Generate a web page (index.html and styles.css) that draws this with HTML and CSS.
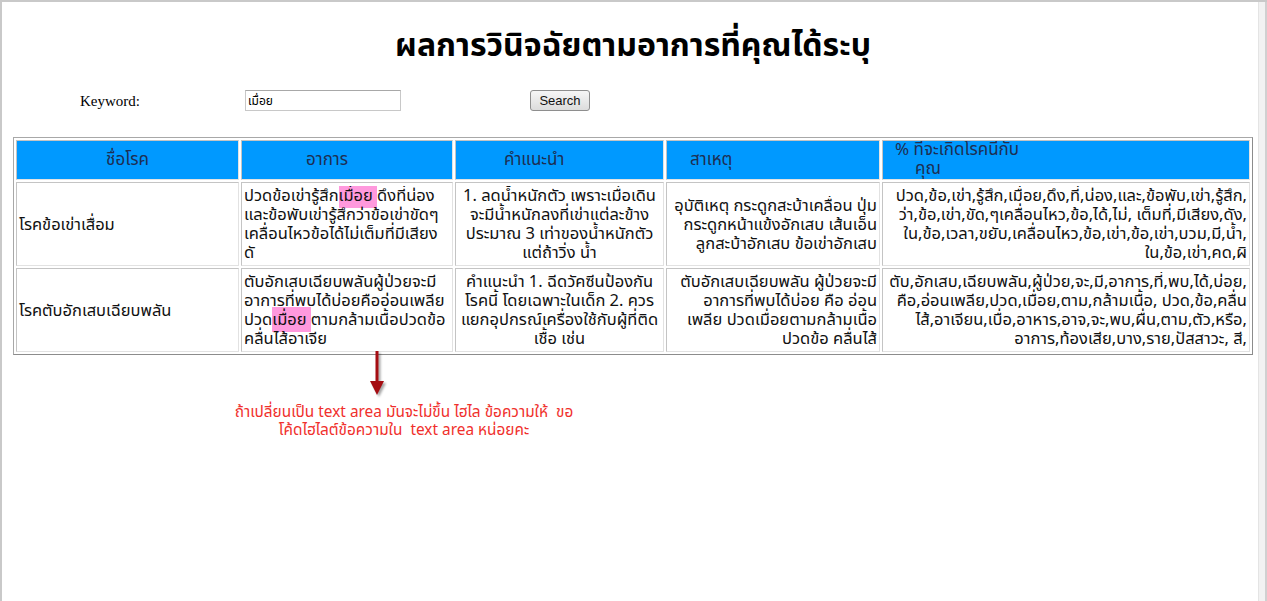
FILE: index.html
```html
<!DOCTYPE html>
<html lang="th">
<head>
<meta charset="utf-8">
<title>ผลการวินิจฉัยตามอาการที่คุณได้ระบุ</title>
<link rel="stylesheet" href="styles.css">
</head>
<body>
<div class="frame">
  <div class="page">
    <h1 class="title">ผลการวินิจฉัยตามอาการที่คุณได้ระบุ</h1>
    <form class="search">
      <label class="kw-label">Keyword:</label>
      <input class="kw-input" type="text" value="เมื่อย">
      <button class="kw-btn" type="button">Search</button>
    </form>
    <table class="result">
      <colgroup>
        <col class="c1"><col class="c2"><col class="c3"><col class="c4"><col class="c5">
      </colgroup>
      <thead>
        <tr>
          <th class="h1c">ชื่อโรค</th>
          <th class="h2c">อาการ</th>
          <th class="h3c">คำแนะนำ</th>
          <th class="h4c">สาเหตุ</th>
          <th class="h5c"><div>% ที่จะเกิดโรคนี้กับ</div><div class="h5b">คุณ</div></th>
        </tr>
      </thead>
      <tbody>
        <tr>
          <td class="name">โรคข้อเข่าเสื่อม</td>
          <td class="left"><div class="clip">ปวดข้อเข่ารู้สึก<span class="hl">เมื่อย </span>ดึงที่น่อง<br>และข้อพับเข่ารู้สึกว่าข้อเข่าขัดๆ<br>เคลื่อนไหวข้อได้ไม่เต็มที่มีเสียง<br>ดั</div></td>
          <td class="center"><div class="clip">1. ลดน้ำหนักตัว เพราะเมื่อเดิน<br>จะมีน้ำหนักลงที่เข่าแต่ละข้าง<br>ประมาณ 3 เท่าของน้ำหนักตัว<br>แต่ถ้าวิ่ง น้ำ</div></td>
          <td class="right"><div class="clip">อุบัติเหตุ กระดูกสะบ้าเคลื่อน ปุ่ม<br>กระดูกหน้าแข้งอักเสบ เส้นเอ็น<br>ลูกสะบ้าอักเสบ ข้อเข่าอักเสบ</div></td>
          <td class="right"><div class="clip">ปวด,ข้อ,เข่า,รู้สึก,เมื่อย,ดึง,ที่,น่อง,และ,ข้อพับ,เข่า,รู้สึก,<br>ว่า,ข้อ,เข่า,ขัด,ๆเคลื่อนไหว,ข้อ,ได้,ไม่, เต็มที่,มีเสียง,ดัง,<br>ใน,ข้อ,เวลา,ขยับ,เคลื่อนไหว,ข้อ,เข่า,ข้อ,เข่า,บวม,มี,น้ำ,<br>ใน,ข้อ,เข่า,คด,ผิ</div></td>
        </tr>
        <tr>
          <td class="name">โรคตับอักเสบเฉียบพลัน</td>
          <td class="left"><div class="clip">ตับอักเสบเฉียบพลันผู้ป่วยจะมี<br>อาการที่พบได้บ่อยคืออ่อนเพลีย<br>ปวด<span class="hl">เมื่อย </span>ตามกล้ามเนื้อปวดข้อ<br>คลื่นไส้อาเจีย</div></td>
          <td class="center"><div class="clip">คำแนะนำ 1. ฉีดวัคซีนป้องกัน<br>โรคนี้ โดยเฉพาะในเด็ก 2. ควร<br>แยกอุปกรณ์เครื่องใช้กับผู้ที่ติด<br>เชื้อ เช่น</div></td>
          <td class="right"><div class="clip">ตับอักเสบเฉียบพลัน ผู้ป่วยจะมี<br>อาการที่พบได้บ่อย คือ อ่อน<br>เพลีย ปวดเมื่อยตามกล้ามเนื้อ<br>ปวดข้อ คลื่นไส้</div></td>
          <td class="right"><div class="clip">ตับ,อักเสบ,เฉียบพลัน,ผู้ป่วย,จะ,มี,อาการ,ที่,พบ,ได้,บ่อย,<br>คือ,อ่อนเพลีย,ปวด,เมื่อย,ตาม,กล้ามเนื้อ, ปวด,ข้อ,คลื่น<br>ไส้,อาเจียน,เบื่อ,อาหาร,อาจ,จะ,พบ,ผื่น,ตาม,ตัว,หรือ,<br>อาการ,ท้องเสีย,บาง,ราย,ปัสสาวะ, สี,</div></td>
        </tr>
      </tbody>
    </table>
    <div class="note">
      <svg class="arrow" width="20" height="46" viewBox="0 0 20 46" aria-hidden="true">
        <rect x="8.5" y="0" width="3" height="32" fill="#a50d12"/>
        <polygon points="3,30 17,30 10,44" fill="#a50d12"/>
      </svg>
      <p class="note-text">ถ้าเปลี่ยนเป็น text area มันจะไม่ขึ้น ไฮไล ข้อความให้&nbsp; ขอ<br>โค้ดไฮไลต์ข้อความใน&nbsp; text area หน่อยคะ</p>
    </div>
  </div>
  <div class="sidebar"></div>
</div>
</body>
</html>
```

FILE: styles.css
```css
html, body {
  margin: 0;
  padding: 0;
  background: #ffffff;
}

body {
  font-family: Tahoma, "Noto Sans Thai", "Noto Sans", "DejaVu Sans", sans-serif;
  color: #111;
}

.frame {
  display: flex;
  width: 1267px;
  height: 601px;
  box-sizing: border-box;
  border-top: 2px solid #c9c9c9;
  border-left: 2px solid #c9c9c9;
  overflow: hidden;
}

.page {
  width: 1256px;
  flex: none;
  position: relative;
}

.sidebar {
  flex: 1;
  background: #f2f2f2;
  border-left: 1px solid #e4e4e4;
  border-right: 2px solid #d0d0d0;
}

.title {
  margin: 26px 0 0 0;
  text-align: center;
  font-size: 32px;
  line-height: 36px;
  font-weight: bold;
  color: #000;
  padding-left: 6px;
}

.search {
  display: grid;
  grid-template-columns: 165px 285px auto;
  align-items: center;
  margin: 26px 0 0 0;
  padding-left: 78px;
  height: 21px;
}

.kw-label {
  font-family: "Liberation Serif", serif;
  font-size: 15px;
  color: #000;
  padding-top: 2px;
}

.kw-input {
  width: 156px;
  height: 21px;
  box-sizing: border-box;
  border: 1px solid #c8c8c8;
  border-top-color: #a8a8a8;
  padding: 1px 2px;
  font-family: inherit;
  font-size: 12px;
  color: #000;
  background: #fff;
}

.kw-btn {
  justify-self: start;
  width: 60px;
  height: 21px;
  box-sizing: border-box;
  border: 1px solid #8e8e8e;
  border-radius: 3px;
  background: linear-gradient(#f6f6f6, #dcdcdc);
  font-family: "Liberation Sans", Arial, sans-serif;
  font-size: 13px;
  color: #111;
  padding: 0;
}

.result {
  margin: 26px 0 0 11px;
  width: 1239px;
  table-layout: fixed;
  border-collapse: separate;
  border-spacing: 2px;
  border: 1px solid #a8a8a8;
  border-right-color: #8c8c8c;
  border-bottom-color: #8c8c8c;
  font-size: 16.5px;
  line-height: 19px;
}

.c1 { width: 223px; }
.c2 { width: 212px; }
.c3 { width: 209px; }
.c4 { width: 214px; }
.c5 { width: 368px; }

.result th,
.result td {
  border: 1px solid #c4c4c4;
  border-right-color: #e2e2e2;
  border-bottom-color: #e2e2e2;
  padding: 0 2px;
  box-sizing: border-box;
  overflow: hidden;
}

.result th {
  height: 40px;
  background: #0099ff;
  color: #1e2e52;
  font-weight: normal;
  font-size: 17px;
  line-height: 19px;
  text-align: left;
  vertical-align: middle;
}

.result th.h1c { text-align: center; }
.result th.h2c { padding-left: 64px; }
.result th.h3c { padding-left: 48px; }
.result th.h4c { padding-left: 23px; }
.result th.h5c { padding-left: 12px; }
.h5b { padding-left: 20px; }

.result td {
  height: 84px;
  vertical-align: middle;
  color: #111;
}

.result td.name { text-align: left; }
.result td.left { text-align: left; }
.result td.center { text-align: center; }
.result td.right { text-align: right; }

.clip {
  max-height: 80px;
  overflow: hidden;
  white-space: nowrap;
}

.hl {
  background: #ff99dd;
}

.note {
  position: relative;
  width: 360px;
  margin: 49px 0 0 222px;
}

.arrow {
  position: absolute;
  left: 143px;
  top: -53px;
  filter: drop-shadow(2px 2px 1px rgba(0,0,0,0.35));
}

.note-text {
  margin: 0;
  text-align: center;
  color: #f0302c;
  font-size: 15.4px;
  line-height: 18px;
}
```
